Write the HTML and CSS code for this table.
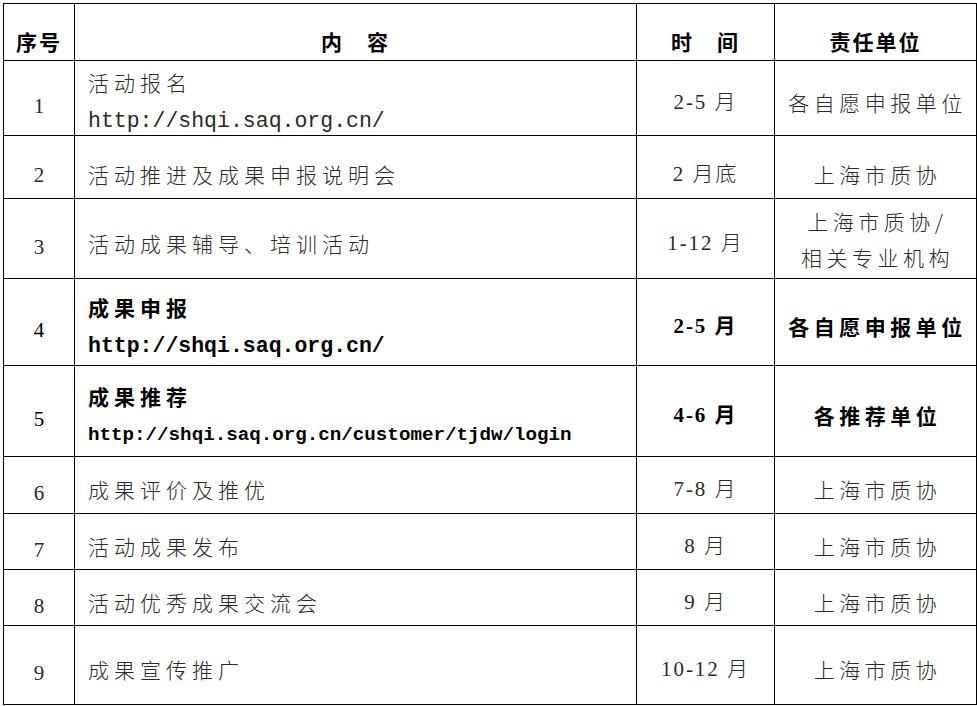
FILE: index.html
```html
<!DOCTYPE html>
<html lang="zh-CN">
<head>
<meta charset="utf-8">
<title>活动安排</title>
<link rel="stylesheet" href="styles.css">
</head>
<body>
<table class="plan">
  <colgroup>
    <col class="c-no"><col class="c-content"><col class="c-time"><col class="c-unit">
  </colgroup>
  <thead>
    <tr class="r-head">
      <th class="th-no">序号</th>
      <th class="th-content">内　容</th>
      <th class="th-time">时　间</th>
      <th class="th-unit">责任单位</th>
    </tr>
  </thead>
  <tbody>
    <tr class="r1">
      <td class="no">1</td>
      <td class="content two"><div class="line">活动报名</div><div class="line url">http://shqi.saq.org.cn/</div></td>
      <td class="time">2-5 月</td>
      <td class="unit">各自愿申报单位</td>
    </tr>
    <tr class="r2">
      <td class="no">2</td>
      <td class="content">活动推进及成果申报说明会</td>
      <td class="time">2 月底</td>
      <td class="unit">上海市质协</td>
    </tr>
    <tr class="r3">
      <td class="no">3</td>
      <td class="content">活动成果辅导、培训活动</td>
      <td class="time">1-12 月</td>
      <td class="unit two-unit"><div class="line">上海市质协/</div><div class="line">相关专业机构</div></td>
    </tr>
    <tr class="r4 strong">
      <td class="no">4</td>
      <td class="content two"><div class="line">成果申报</div><div class="line url">http://shqi.saq.org.cn/</div></td>
      <td class="time">2-5 月</td>
      <td class="unit">各自愿申报单位</td>
    </tr>
    <tr class="r5 strong">
      <td class="no">5</td>
      <td class="content two"><div class="line">成果推荐</div><div class="line url url-small">http://shqi.saq.org.cn/customer/tjdw/login</div></td>
      <td class="time">4-6 月</td>
      <td class="unit">各推荐单位</td>
    </tr>
    <tr class="r6">
      <td class="no">6</td>
      <td class="content">成果评价及推优</td>
      <td class="time">7-8 月</td>
      <td class="unit">上海市质协</td>
    </tr>
    <tr class="r7">
      <td class="no">7</td>
      <td class="content">活动成果发布</td>
      <td class="time">8 月</td>
      <td class="unit">上海市质协</td>
    </tr>
    <tr class="r8">
      <td class="no">8</td>
      <td class="content">活动优秀成果交流会</td>
      <td class="time">9 月</td>
      <td class="unit">上海市质协</td>
    </tr>
    <tr class="r9">
      <td class="no">9</td>
      <td class="content">成果宣传推广</td>
      <td class="time">10-12 月</td>
      <td class="unit">上海市质协</td>
    </tr>
  </tbody>
</table>
</body>
</html>
```

FILE: styles.css
```css
html, body {
  margin: 0;
  padding: 0;
  background: #fff;
}
body {
  padding: 3px 0 0 3px;
  font-family: "Liberation Serif", "Noto Sans CJK SC", serif;
  color: #2a2a2a;
}
.plan {
  border-collapse: collapse;
  table-layout: fixed;
  width: 973px;
}
.c-no { width: 71px; }
.c-content { width: 562px; }
.c-time { width: 138px; }
.c-unit { width: 202px; }

.plan th,
.plan td {
  border: 1px solid #000;
  padding: 8px 0 0 0;
  vertical-align: middle;
  font-size: 21px;
  line-height: 28px;
  font-weight: 300;
  overflow: hidden;
}
.plan th {
  font-family: "Noto Sans CJK SC", sans-serif;
  font-weight: 700;
  color: #000;
  padding-top: 18px;
  text-align: center;
  letter-spacing: 2px;
}
.th-content { letter-spacing: 5px; }
.th-time { letter-spacing: 8px; }

.r-head { height: 57px; }
.r1 { height: 74px; }
.r2 { height: 63px; }
.r3 { height: 80px; }
.r4 { height: 87px; }
.r5 { height: 91px; }
.r6 { height: 57px; }
.r7 { height: 56px; }
.r8 { height: 56px; }
.r9 { height: 79px; }

.r2 td { padding-top: 14px; }
.r1 td.two { padding-top: 7px; }

.no {
  text-align: center;
  font-size: 22px;
}
.plan td.no { padding-top: 16px; }

.content {
  padding-left: 13px !important;
  letter-spacing: 5px;
  font-family: "Noto Sans CJK SC", sans-serif;
  white-space: nowrap;
}
.two .line + .line {
  margin-top: 11px;
}
.url {
  font-family: "Liberation Mono", monospace;
  letter-spacing: 0;
  font-size: 21.5px;
}
.url-small {
  font-size: 19.2px;
}
.time {
  text-align: center;
  font-size: 22px;
  letter-spacing: 2px;
}
.unit {
  text-align: center;
  font-family: "Noto Sans CJK SC", sans-serif;
  letter-spacing: 4.5px;
  padding-left: 4px !important;
  white-space: nowrap;
}
.plan td.two-unit {
  padding-top: 0;
}
.two-unit .line + .line {
  margin-top: 8px;
}

.strong td {
  color: #000;
}
.strong .content,
.strong .time,
.strong .unit {
  font-weight: 700;
}
```
